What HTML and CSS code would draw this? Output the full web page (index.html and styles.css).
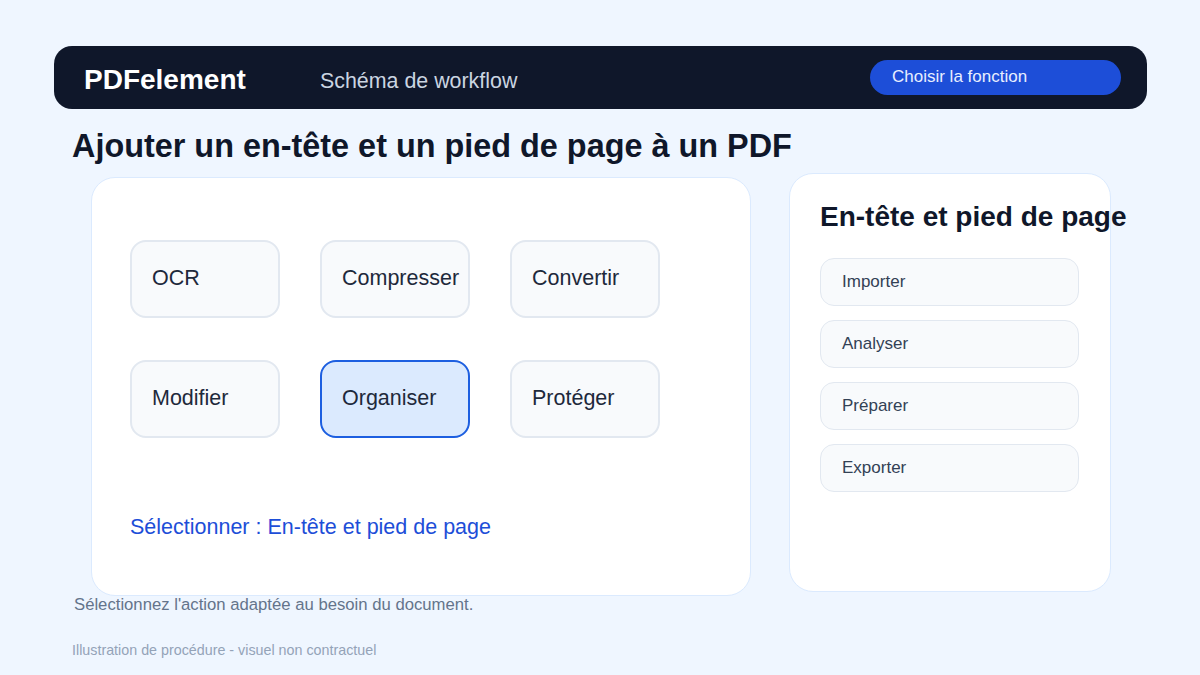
FILE: index.html
```
<!DOCTYPE html>
<html lang="fr">
<head>
<meta charset="utf-8">
<title>PDFelement - Schéma de workflow</title>
<link rel="stylesheet" href="styles.css">
</head>
<body>
<div class="page">
  <header class="topbar">
    <div class="brand">PDFelement</div>
    <div class="tagline">Schéma de workflow</div>
    <div class="cta">Choisir la fonction</div>
  </header>
  <h1 class="title">Ajouter un en-tête et un pied de page à un PDF</h1>
  <div class="content">
    <section class="card">
      <div class="grid">
        <div class="tile">OCR</div>
        <div class="tile">Compresser</div>
        <div class="tile">Convertir</div>
        <div class="tile">Modifier</div>
        <div class="tile tile-active">Organiser</div>
        <div class="tile">Protéger</div>
      </div>
      <div class="selection">Sélectionner : En-tête et pied de page</div>
    </section>
    <aside class="panel">
      <h2 class="panel-title">En-tête et pied de page</h2>
      <div class="steps">
        <div class="step">Importer</div>
        <div class="step">Analyser</div>
        <div class="step">Préparer</div>
        <div class="step">Exporter</div>
      </div>
    </aside>
  </div>
  <p class="hint">Sélectionnez l'action adaptée au besoin du document.</p>
  <p class="note">Illustration de procédure - visuel non contractuel</p>
</div>
</body>
</html>
```

FILE: styles.css
```
* { box-sizing: border-box; }
html, body {
  margin: 0;
  padding: 0;
}
body {
  background: #eff6ff;
  font-family: "Liberation Sans", Arial, sans-serif;
  width: 1200px;
  height: 675px;
  overflow: hidden;
}
.page {
  padding: 46px 53px 0 54px;
}
.topbar {
  height: 63px;
  background: #0f172a;
  border-radius: 18px;
  display: flex;
  align-items: center;
  padding: 0 26px 0 30px;
}
.brand {
  color: #ffffff;
  font-weight: 700;
  font-size: 28px;
  width: 236px;
  padding-top: 4px;
}
.tagline {
  color: #cbd5e1;
  font-size: 21.4px;
  flex: 1;
  padding-top: 8px;
}
.cta {
  width: 251px;
  height: 35px;
  background: #1d4ed8;
  border-radius: 18px;
  color: #e8eeff;
  font-size: 17px;
  display: flex;
  align-items: center;
  padding: 0 22px 1px;
}
.title {
  margin: 19px 0 0 18px;
  font-size: 32.4px;
  line-height: 36px;
  font-weight: 700;
  color: #0f172a;
}
.content {
  display: flex;
  align-items: flex-start;
  margin: 9px 0 0 37px;
  gap: 38px;
}
.card {
  margin-top: 4px;
  width: 660px;
  height: 419px;
  background: #ffffff;
  border: 1px solid #dbeafe;
  border-radius: 24px;
  padding: 62px 0 0 38px;
}
.grid {
  display: grid;
  grid-template-columns: repeat(3, 150px);
  grid-auto-rows: 78px;
  column-gap: 40px;
  row-gap: 42px;
}
.tile {
  background: #f8fafc;
  border: 2px solid #e2e8f0;
  border-radius: 16px;
  display: flex;
  align-items: center;
  padding: 0 0 1px 20px;
  font-size: 21.5px;
  color: #1e293b;
  white-space: nowrap;
}
.tile-active {
  background: #dbeafe;
  border-color: #1d5fe0;
}
.selection {
  margin-top: 77px;
  font-size: 21.5px;
  line-height: 24px;
  color: #1d4ed8;
}
.panel {
  width: 322px;
  height: 419px;
  background: #ffffff;
  border: 1px solid #dbeafe;
  border-radius: 24px;
  padding: 28px 0 0 30px;
}
.panel-title {
  margin: 0;
  font-size: 28px;
  line-height: 30px;
  font-weight: 700;
  color: #0f172a;
  white-space: nowrap;
}
.steps {
  margin-top: 26px;
  display: flex;
  flex-direction: column;
  gap: 14px;
}
.step {
  width: 259px;
  height: 48px;
  background: #f8fafc;
  border: 1px solid #e2e8f0;
  border-radius: 14px;
  display: flex;
  align-items: center;
  padding: 0 0 0 21px;
  font-size: 17px;
  color: #334155;
}
.hint {
  margin: 0 0 0 20px;
  font-size: 16.7px;
  line-height: 18px;
  color: #64748b;
}
.note {
  margin: 28px 0 0 18px;
  font-size: 14.3px;
  line-height: 16px;
  color: #94a3b8;
}
```
